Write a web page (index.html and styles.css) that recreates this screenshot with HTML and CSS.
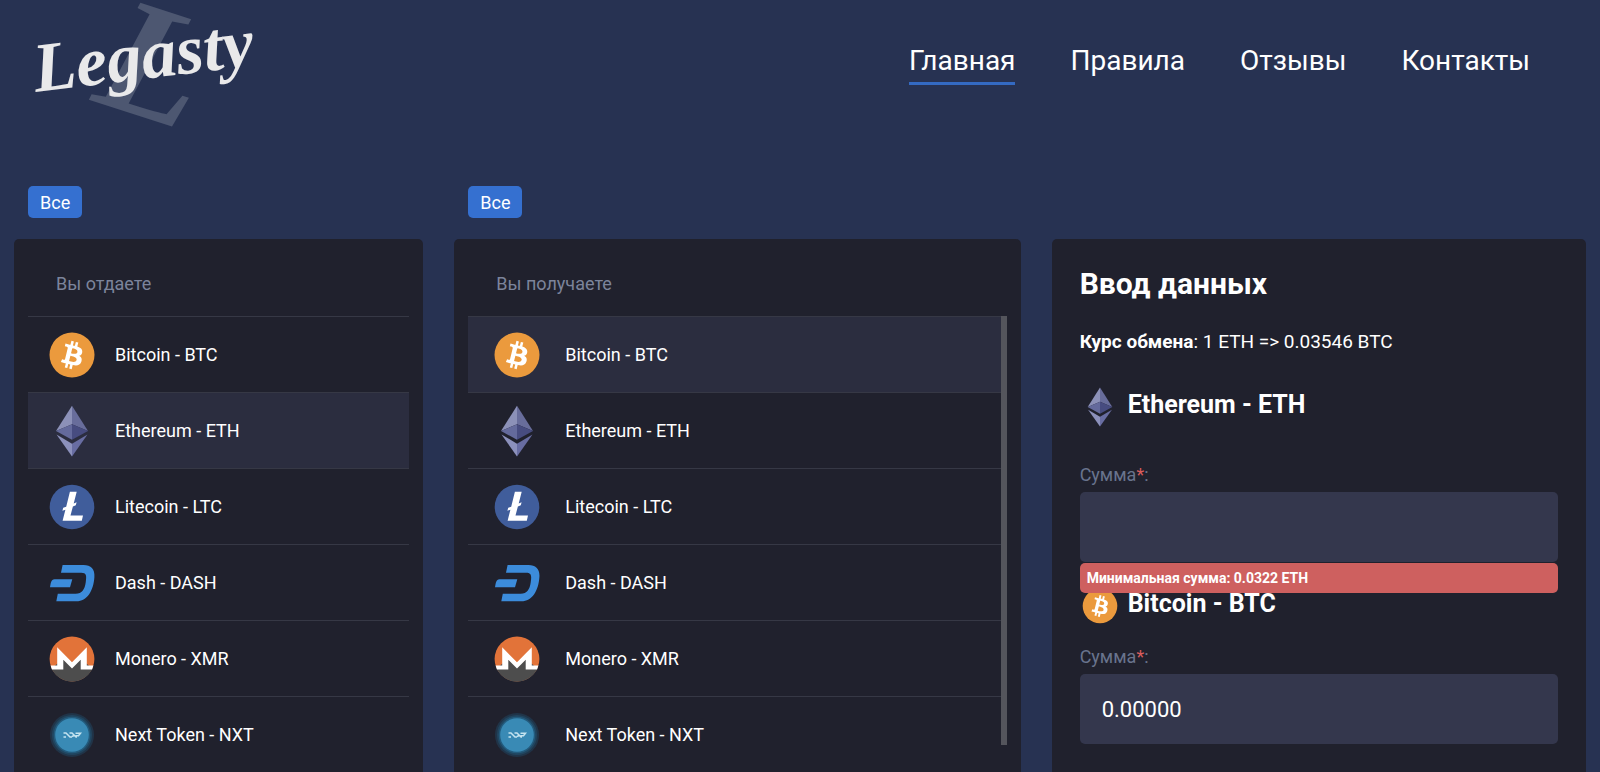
FILE: index.html
```html
<!DOCTYPE html>
<html lang="ru">
<head>
<meta charset="UTF-8">
<meta name="viewport" content="width=device-width, initial-scale=1.0">
<title>Legasty</title>
<link rel="stylesheet" href="styles.css">
</head>
<body>

<!-- Coin icons -->
<svg class="sprite" aria-hidden="true">
  <symbol id="btc" viewBox="0 0 52 52">
    <circle cx="26" cy="26" r="22.5" fill="#eb9a3d"/>
    <path transform="translate(3.3 3.3) scale(1.42)" fill="#fff" d="M23.189 14.02c.314-2.096-1.283-3.223-3.465-3.975l.708-2.84-1.728-.43-.69 2.765c-.454-.114-.92-.22-1.385-.326l.695-2.783L15.596 6l-.708 2.839c-.376-.086-.746-.17-1.104-.26l.002-.009-2.384-.595-.46 1.846s1.283.294 1.256.312c.7.175.826.638.805 1.006l-.806 3.235c.048.012.11.03.18.057l-.183-.045-1.13 4.532c-.086.212-.303.531-.793.41.018.025-1.256-.313-1.256-.313l-.858 1.978 2.25.561c.418.105.828.215 1.231.318l-.715 2.872 1.727.43.708-2.84c.472.127.93.245 1.378.357l-.706 2.828 1.728.43.715-2.866c2.948.558 5.164.333 6.097-2.333.752-2.146-.037-3.385-1.588-4.192 1.13-.26 1.98-1.003 2.207-2.538zm-3.95 5.538c-.533 2.147-4.148.986-5.32.695l.95-3.805c1.172.293 4.929.872 4.37 3.11zm.535-5.569c-.487 1.953-3.495.96-4.47.717l.86-3.45c.975.243 4.118.696 3.61 2.733z"/>
  </symbol>
  <symbol id="eth" viewBox="0 0 52 52">
    <path fill="#8c91b8" d="M26 .7 10 26l16-6.8z"/>
    <path fill="#686d9b" d="M26 .7 42 26l-16-6.8z"/>
    <path fill="#646a9c" d="M10 26l16-6.8v15.6z"/>
    <path fill="#474c80" d="M42 26l-16-6.8v15.6z"/>
    <path fill="#8c91bc" d="M10.5 29.5 26 38.7v12.8z"/>
    <path fill="#686da2" d="M41.5 29.5 26 38.7v12.8z"/>
  </symbol>
  <symbol id="ltc" viewBox="0 0 52 52">
    <circle cx="26" cy="26" r="22.3" fill="#405d9b"/>
    <path fill="#fff" d="M23.9 10.8h6.8l-3 11.6 2.9-1.1-.8 3-2.9 1.1-2.4 9.2H37l-1.200 5.200H16.600l2.800-11.100-3 1.100.8-3 3-1.100z"/>
  </symbol>
  <symbol id="dash" viewBox="0 0 52 52">
    <path fill="#3c8cdb" d="M16.600 8h20.900C45 8 49 12.200 48.400 20 47.500 34 41 44.300 30.500 44.300H10.300l1.500-7.600h17.900c6.300 0 9-4.200 10-11.200 1-7 .8-9.800-4.500-9.800H15z"/>
    <path fill="#3c8cdb" d="M8.500 22.300h17.800l-2.300 8H4c.8-4.300 1-8 4.500-8z"/>
  </symbol>
  <symbol id="xmr" viewBox="0 0 52 52">
    <circle cx="26" cy="26" r="22.4" fill="#e27339"/>
    <path fill="#4d4d4d" d="M5.600 35.500A22.400 22.400 0 0 0 46.400 35.500L35 26l-9 8-9-8z"/>
    <path fill="#fff" d="M11.200 14.300 26 29.200l14.800-14.900v18.300h6.600l-1.300 4H34.700V26.800L26 35.500l-8.700-8.700v9.800H5.900l-1.300-4h6.600z"/>
  </symbol>
  <symbol id="nxt" viewBox="0 0 52 52">
    <circle cx="26" cy="26" r="22" fill="#203448"/>
    <circle cx="26" cy="26" r="20" fill="#20455f"/>
    <circle cx="26" cy="26" r="18.300" fill="#235b7d"/>
    <circle cx="26" cy="26" r="16.800" fill="#398ab5"/>
    <path fill="none" stroke="#c5e4f0" stroke-width="1.500" d="M17.500 24h2.500l4 4h2M17.500 28h2.500M23.500 24h2.500l4 4h1M26 27.500l2-1M29.500 24.200h5l-2 2.600h-3"/>
  </symbol>
</svg>

<header class="header">
  <a class="logo" href="#" aria-label="Legasty">
    <svg width="260" height="140" viewBox="0 0 260 140">
      <text class="logo-mark" x="90" y="100" transform="rotate(18 90 100)">L</text>
      <text class="logo-name" x="36" y="92" transform="rotate(-7 36 92)">Legasty</text>
    </svg>
  </a>
  <nav class="nav">
    <a class="active" href="#">Главная</a>
    <a href="#">Правила</a>
    <a href="#">Отзывы</a>
    <a href="#">Контакты</a>
  </nav>
</header>

<main class="exchange">
  <div class="filter"><button type="button">Все</button></div>
  <div class="filter"><button type="button">Все</button></div>

  <section class="card give">
    <h3 class="card-title">Вы отдаете</h3>
    <ul class="coins">
      <li><button type="button"><svg><use href="#btc"/></svg>Bitcoin - BTC</button></li>
      <li class="selected"><button type="button"><svg><use href="#eth"/></svg>Ethereum - ETH</button></li>
      <li><button type="button"><svg><use href="#ltc"/></svg>Litecoin - LTC</button></li>
      <li><button type="button"><svg><use href="#dash"/></svg>Dash - DASH</button></li>
      <li><button type="button"><svg><use href="#xmr"/></svg>Monero - XMR</button></li>
      <li><button type="button"><svg><use href="#nxt"/></svg>Next Token - NXT</button></li>
    </ul>
  </section>

  <section class="card get">
    <h3 class="card-title">Вы получаете</h3>
    <ul class="coins">
      <li class="selected"><button type="button"><svg><use href="#btc"/></svg>Bitcoin - BTC</button></li>
      <li><button type="button"><svg><use href="#eth"/></svg>Ethereum - ETH</button></li>
      <li><button type="button"><svg><use href="#ltc"/></svg>Litecoin - LTC</button></li>
      <li><button type="button"><svg><use href="#dash"/></svg>Dash - DASH</button></li>
      <li><button type="button"><svg><use href="#xmr"/></svg>Monero - XMR</button></li>
      <li><button type="button"><svg><use href="#nxt"/></svg>Next Token - NXT</button></li>
    </ul>
  </section>

  <form class="card data">
    <h2>Ввод данных</h2>
    <p class="rate"><b>Курс обмена</b>: 1 ETH =&gt; 0.03546 BTC</p>

    <div class="currency currency-from"><svg><use href="#eth"/></svg>Ethereum - ETH</div>
    <div class="field">
      <label for="sum-from">Сумма<span>*</span>:</label>
      <input type="text" id="sum-from">
      <div class="error">Минимальная сумма: 0.0322 ETH</div>
    </div>

    <div class="currency"><svg><use href="#btc"/></svg>Bitcoin - BTC</div>
    <div class="field">
      <label for="sum-to">Сумма<span>*</span>:</label>
      <input type="text" id="sum-to" value="0.00000">
    </div>
  </form>
</main>

</body>
</html>
```
FILE: styles.css
```css
* {
  box-sizing: border-box;
}

body {
  margin: 0;
  background-color: #273252;
  color: #fff;
  font-family: Roboto, sans-serif;
  font-size: 18px;
  line-height: 24px;
}

button,
input {
  font: inherit;
  color: inherit;
  border: 0;
}

button {
  cursor: pointer;
}

.sprite {
  position: absolute;
  width: 0;
  height: 0;
}

/* Header */
.header {
  display: flex;
  justify-content: space-between;
  align-items: flex-start;
  height: 186px;
  padding-right: 70px;
}

.logo svg {
  display: block;
  overflow: visible;
}

.logo text {
  font-family: "Brush Script MT", "Liberation Serif", serif;
  font-style: italic;
  font-weight: bold;
}

.logo-mark {
  font-size: 165px;
  fill: #4d5771;
}

.logo-name {
  font-size: 70px;
  fill: #e9e9ea;
}

.nav {
  display: flex;
  gap: 55px;
  padding-top: 43px;
}

.nav a {
  padding-bottom: 3px;
  border-bottom: 3px solid transparent;
  color: #fff;
  font-size: 28px;
  line-height: 36px;
  text-decoration: none;
}

.nav .active {
  border-color: #346ac2;
}

/* Exchange columns */
.exchange {
  display: grid;
  grid-template-columns: 409fr 566fr 534fr;
  column-gap: 31px;
  padding: 0 14px;
}

.filter {
  padding: 0 14px 21px;
}

.filter button {
  display: block;
  height: 32px;
  padding: 2px 12px 0;
  border-radius: 5px;
  background-color: #3570d0;
}

.card {
  border-radius: 5px;
  background-color: #20212d;
  padding: 0 14px 28px;
}

.give {
  grid-column: 1;
}

.card-title {
  margin: 0;
  padding: 33px 28px 20px;
  color: #7c849b;
  font-size: 18px;
  font-weight: 400;
}

.coins {
  position: relative;
  margin: 0;
  padding: 0;
  list-style: none;
}

.coins li {
  height: 76px;
  border-top: 1px solid #363845;
}

.coins .selected {
  background-color: #2b2d3f;
}

.coins button {
  display: flex;
  align-items: center;
  gap: 17px;
  width: 100%;
  height: 100%;
  padding: 0 18px;
  background: none;
  text-align: left;
}

.coins svg {
  width: 52px;
  height: 52px;
}

.get .coins button {
  gap: 22px;
  padding: 0 23px;
}

/* Scroll thumb */
.get .coins::after {
  content: "";
  position: absolute;
  top: 0;
  right: 0;
  width: 6px;
  height: 429px;
  background-color: #54555c;
}

/* Form */
.data {
  padding: 25px 28px 28px;
}

.data h2 {
  margin: 0;
  font-size: 30px;
  font-weight: 700;
  line-height: 40px;
}

.rate {
  margin: 26px 0 33px;
  font-size: 19px;
  line-height: 24px;
}

.currency {
  display: flex;
  align-items: flex-start;
  gap: 8px;
  height: 40px;
  margin-bottom: 19px;
  font-size: 25px;
  font-weight: 700;
  line-height: 36px;
}

.currency svg {
  width: 40px;
  height: 40px;
}

.currency-from {
  margin-bottom: 36px;
}

.field {
  position: relative;
  margin-bottom: 24px;
}

.field label {
  display: block;
  margin-bottom: 5px;
  color: #69748d;
}

.field label span {
  color: #d95c5c;
}

.field input {
  display: block;
  width: 100%;
  height: 70px;
  padding: 0 22px;
  border-radius: 5px;
  outline: none;
  background-color: #34374d;
  font-size: 22px;
}

.error {
  position: absolute;
  top: 100%;
  left: 0;
  right: 0;
  margin-top: 1px;
  padding: 3px 7px;
  border-radius: 5px;
  background-color: #ce605f;
  font-size: 14px;
  font-weight: 700;
}
```
